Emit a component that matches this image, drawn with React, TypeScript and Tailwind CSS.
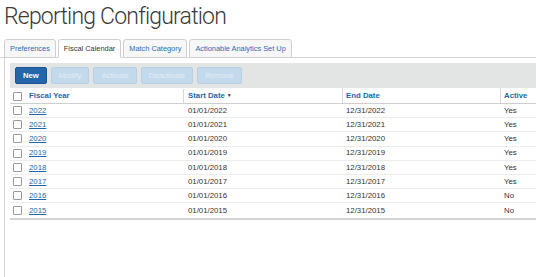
import React from 'react';
import { clsx } from 'clsx';

const tabs = ['Preferences', 'Fiscal Calendar', 'Match Category', 'Actionable Analytics Set Up'];
const buttons = ['New', 'Modify', 'Activate', 'Deactivate', 'Remove'];

const rows = [
  { year: '2022', active: 'Yes' },
  { year: '2021', active: 'Yes' },
  { year: '2020', active: 'Yes' },
  { year: '2019', active: 'Yes' },
  { year: '2018', active: 'Yes' },
  { year: '2017', active: 'Yes' },
  { year: '2016', active: 'No' },
  { year: '2015', active: 'No' },
];

const Checkbox = () => (
  <span className="inline-block w-[9px] h-[9px] border border-[#9a9a9a] bg-white rounded-[1px] shrink-0" />
);

export default function App() {
  return (
    <div className="w-[536px] h-[277px] bg-white overflow-hidden font-['Liberation_Sans',Arial,sans-serif] text-[#333]">
      <h1 className="h-[38px] pl-[4px] pt-[2px] text-[23px] leading-[30px] font-light font-['Roboto',sans-serif] text-[#3a3a3a] tracking-[-0.8px]">
        Reporting Configuration
      </h1>

      <div className="flex items-end gap-[2px] pl-[4px] border-b border-[#d4d4d4] h-[20px]">
        {tabs.map((tab, i) => (
          <div
            key={tab}
            className={clsx(
              'h-[19px] px-[5px] flex items-center text-[7.4px] border border-[#d0d0d0] rounded-t-[3px] -mb-px',
              i === 1 ? 'bg-white border-b-white text-[#333]' : 'bg-[#f7f7f7] text-[#2a6db0]'
            )}
          >
            {tab}
          </div>
        ))}
      </div>

      <div className="ml-[4px] border-l border-[#d4d4d4] pl-[5px] pt-[5px] h-[220px]">
        <div className="h-[25px] bg-[#e3e4e4] flex items-center gap-[4px] pl-[5px]">
          {buttons.map((b, i) => (
            <button
              key={b}
              className={clsx(
                'h-[17px] px-[7px] rounded-[2px] text-[7.7px] border',
                i === 0
                  ? 'bg-[#2466aa] border-[#1c5491] text-white font-bold'
                  : 'bg-[#c3d9ec] border-[#b8d0e6] text-[#e4edf6]'
              )}
            >
              {b}
            </button>
          ))}
        </div>

        <div className="text-[7.8px] mt-[1px]">
          <div className="grid grid-cols-[173px_159px_158px_1fr] h-[15px] border-b border-[#cfcfcf] font-bold text-[#1f66ad]">
            <div className="flex items-center gap-[7px] pl-[3px]">
              <Checkbox />
              <span>Fiscal Year</span>
            </div>
            <div className="flex items-center pl-[4px] border-l border-[#d6d6d6]">
              Start Date <span className="ml-[2px] text-[5px] text-[#333]">▼</span>
            </div>
            <div className="flex items-center pl-[3px] border-l border-[#d6d6d6]">End Date</div>
            <div className="flex items-center pl-[3px] border-l border-[#d6d6d6]">Active</div>
          </div>

          <div className="border-b-2 border-[#d2d2d2]">
            {rows.map((r, i) => (
              <div
                key={r.year}
                className={clsx(
                  'grid grid-cols-[173px_159px_158px_1fr] h-[14.2px] items-center',
                  i < rows.length - 1 && 'border-b border-[#ececec]'
                )}
              >
                <div className="flex items-center gap-[7px] pl-[3px]">
                  <Checkbox />
                  <a className="text-[#1f66ad] underline underline-offset-1">{r.year}</a>
                </div>
                <div className="pl-[5px]">01/01/{r.year}</div>
                <div className="pl-[4px]">12/31/{r.year}</div>
                <div className="pl-[4px]">{r.active}</div>
              </div>
            ))}
          </div>
        </div>
      </div>
    </div>
  );
}
